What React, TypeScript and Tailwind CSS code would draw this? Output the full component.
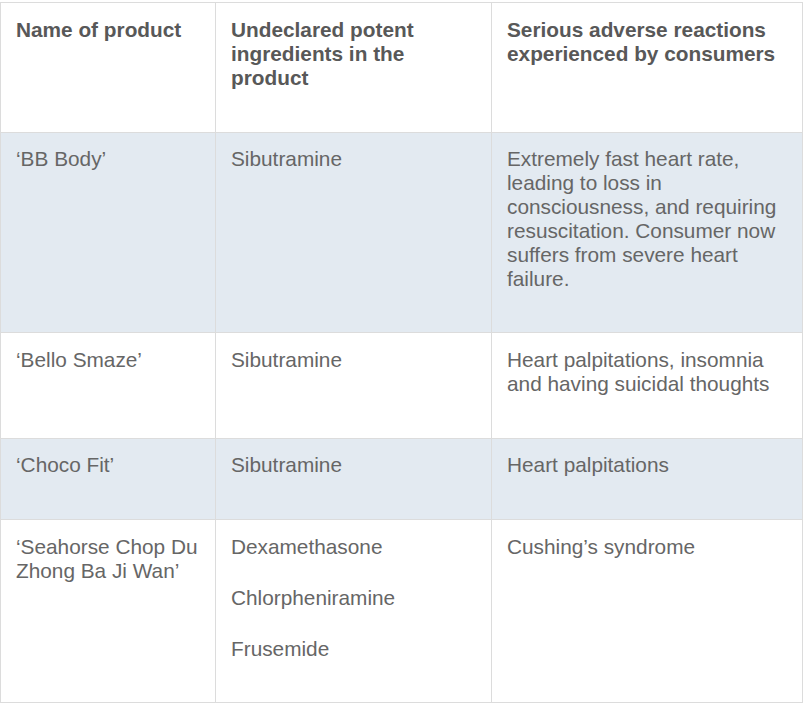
const rows: { name: string; ingredients: string[]; reactions: string; striped: boolean; pad: string }[] = [
  {
    name: '‘BB Body’',
    ingredients: ['Sibutramine'],
    reactions:
      'Extremely fast heart rate, leading to loss in consciousness, and requiring resuscitation. Consumer now suffers from severe heart failure.',
    striped: true,
    pad: 'pt-[14px] pb-[14px]',
  },
  {
    name: '‘Bello Smaze’',
    ingredients: ['Sibutramine'],
    reactions: 'Heart palpitations, insomnia and having suicidal thoughts',
    striped: false,
    pad: 'pt-[15px] pb-[15px]',
  },
  {
    name: '‘Choco Fit’',
    ingredients: ['Sibutramine'],
    reactions: 'Heart palpitations',
    striped: true,
    pad: 'pt-[14px] pb-[15px]',
  },
  {
    name: '‘Seahorse Chop Du Zhong Ba Ji Wan’',
    ingredients: ['Dexamethasone', 'Chlorpheniramine', 'Frusemide'],
    reactions: 'Cushing’s syndrome',
    striped: false,
    pad: 'pt-[15px] pb-[14px]',
  },
];

const headCell = 'border border-[#dcdcdc] align-top pl-[15px] pr-4 pt-[15px] pb-[15px]';
const cell = 'border border-[#dcdcdc] align-top pl-[15px] pr-4';

export default function App() {
  return (
    <div className="w-[805px] h-[703px] bg-white pt-[2px] font-['Liberation_Sans',Arial,sans-serif] text-[20.8px] leading-6 text-[#666]">
      <table className="w-[802px] border-collapse table-fixed">
        <colgroup>
          <col className="w-[215px]" />
          <col className="w-[276px]" />
          <col className="w-[311px]" />
        </colgroup>
        <thead>
          <tr className="text-left font-bold text-[#585858]">
            <th className={headCell}>
              <p className="mb-[27px]">Name of product</p>
            </th>
            <th className={headCell}>
              <p className="mb-[27px]">Undeclared potent ingredients in the product</p>
            </th>
            <th className={headCell}>
              <p className="mb-[27px]">Serious adverse reactions experienced by consumers</p>
            </th>
          </tr>
        </thead>
        <tbody>
          {rows.map((row) => (
            <tr key={row.name} className={row.striped ? 'bg-[#e3eaf1]' : 'bg-white'}>
              <td className={`${cell} ${row.pad}`}>
                <p className="mb-[27px]">{row.name}</p>
              </td>
              <td className={`${cell} ${row.pad}`}>
                {row.ingredients.map((ing) => (
                  <p key={ing} className="mb-[27px]">
                    {ing}
                  </p>
                ))}
              </td>
              <td className={`${cell} ${row.pad}`}>
                <p className="mb-[27px]">{row.reactions}</p>
              </td>
            </tr>
          ))}
        </tbody>
      </table>
    </div>
  );
}
